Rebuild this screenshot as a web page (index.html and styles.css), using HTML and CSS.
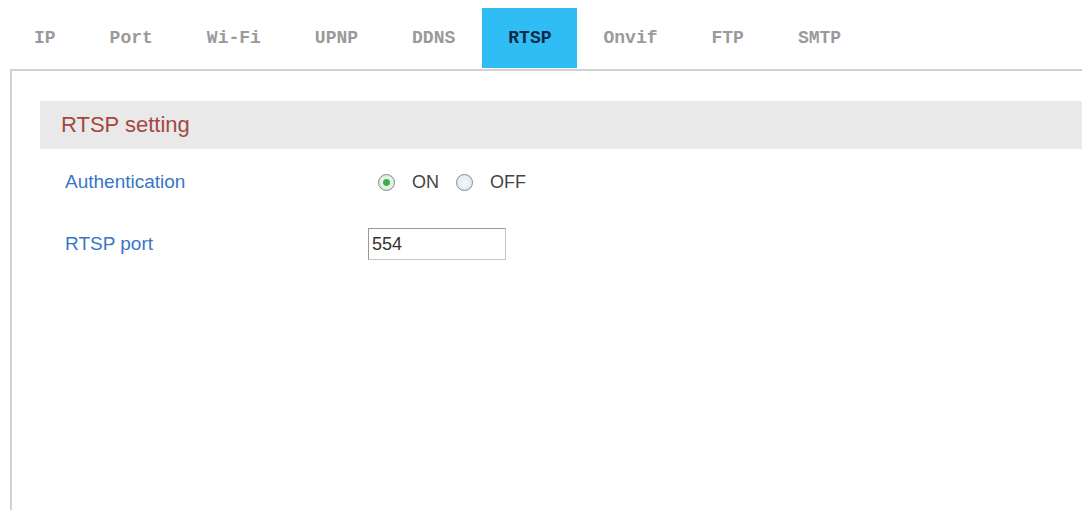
FILE: index.html
```html
<!DOCTYPE html>
<html lang="en">
<head>
    <meta charset="UTF-8">
    <title>Network - RTSP</title>
    <link rel="stylesheet" href="styles.css">
</head>
<body>
    <ul class="tabs">
        <li>IP</li>
        <li>Port</li>
        <li>Wi-Fi</li>
        <li>UPNP</li>
        <li>DDNS</li>
        <li class="active">RTSP</li>
        <li>Onvif</li>
        <li>FTP</li>
        <li>SMTP</li>
    </ul>

    <div class="panel">
        <div class="section-title">RTSP setting</div>
        <div class="form">
            <label class="field-label">Authentication</label>
            <div class="radios">
                <input type="radio" name="auth" id="authOn" checked>
                <label for="authOn" class="radio-text">ON</label>
                <input type="radio" name="auth" id="authOff">
                <label for="authOff" class="radio-text">OFF</label>
            </div>

            <label class="field-label" for="rtspPort">RTSP port</label>
            <div>
                <input type="text" id="rtspPort" class="text-input" value="554">
            </div>
        </div>
    </div>
</body>
</html>
```

FILE: styles.css
```css
body { margin: 0; background: #fff; font-family: 'Liberation Sans', Arial, sans-serif; }

.tabs { list-style: none; margin: 0 0 0 7px; padding: 8px 0 0; display: flex; height: 60px; }
.tabs li { padding: 0 27px; line-height: 60px; font-family: 'Liberation Mono', 'Courier New', monospace; font-size: 18px; font-weight: bold; color: #9a9a9a; }
.tabs li.active { background: #30bdf4; color: #0d2b46; padding: 0 25px 0 26px; }

.panel { margin: 1px 5px 0 10px; height: 409px; border-top: 2px solid #d2d2d2; border-left: 2px solid #d2d2d2; padding: 30px 0 0 28px; }

.section-title { background: #e9e9e9; height: 48px; line-height: 48px; padding-left: 21px; font-size: 22px; color: #a3483f; }

.form { display: grid; grid-template-columns: 303px 1fr; grid-auto-rows: 62px; align-items: center; margin-top: 2px; padding-left: 25px; }
.field-label { font-size: 19px; color: #3a76c6; }

.radios { display: flex; align-items: center; padding-left: 10px; }
.radios input { appearance: none; -webkit-appearance: none; margin: 0 17px 0 0; width: 17px; height: 17px; border-radius: 50%; border: 1.5px solid #8a8a8a; background: radial-gradient(circle, #f4f9fb 0, #d7e7ef 100%); box-sizing: border-box; }
.radios input:checked { background: radial-gradient(circle, #3fae4a 0, #3fae4a 3px, #e8f4ea 4px, #cfe6d3 100%); }
.radio-text { font-size: 18px; color: #444; margin-right: 17px; }

.text-input { width: 138px; height: 32px; box-sizing: border-box; border: 1px solid #9a9a9a; border-right-color: #c4c4c4; border-bottom-color: #c4c4c4; padding: 0 3px; font-family: 'Liberation Sans', Arial, sans-serif; font-size: 18px; color: #333; outline: none; }
```
